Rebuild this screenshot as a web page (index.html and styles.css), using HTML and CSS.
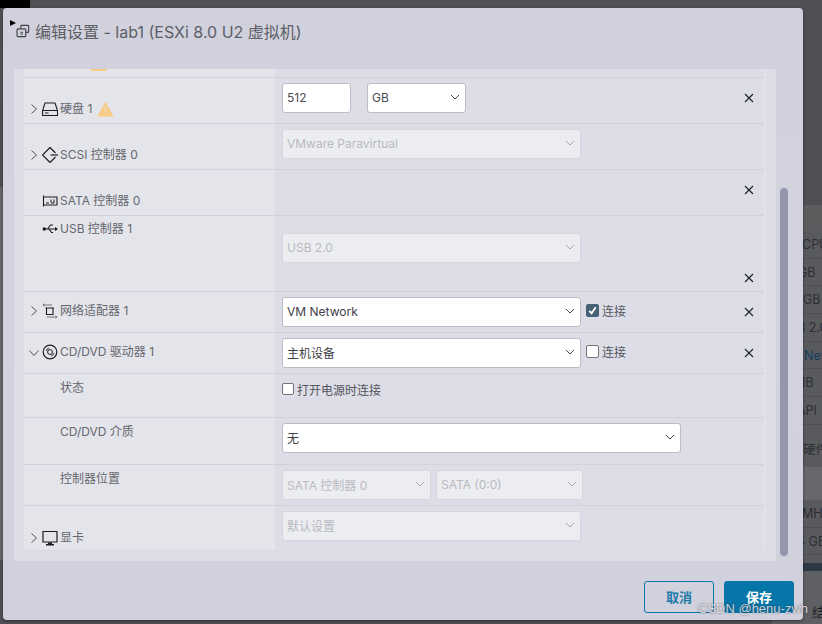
FILE: index.html
```html
<!DOCTYPE html>
<html lang="zh">
<head>
<meta charset="utf-8">
<title>编辑设置</title>
<link rel="stylesheet" href="styles.css">
</head>
<body>
<div class="corner"></div>
<aside class="backdrop">
  <div class="bd-top"></div>
  <div class="bd-row o30">CPU</div>
  <div class="bd-row o26">GB</div>
  <div class="bd-row o31">GB</div>
  <div class="bd-row o25">B 2.0</div>
  <div class="bd-row bd-link o32">Net</div>
  <div class="bd-row o22">MB</div>
  <div class="bd-row o25">API</div>
  <div class="bd-head o31">硬件</div>
  <div class="bd-gap"></div>
  <div class="bd-row o30">MHz</div>
  <div class="bd-row o25">4 GB</div>
  <div class="bd-dark"></div>
  <div class="bd-foot">结</div>
</aside>

<section class="dialog">
  <span class="caret"></span>
  <header class="title">
    <svg class="title-icon" viewBox="0 0 16 16" width="14" height="14"><path d="M5.500 4.500V2.500a1 1 0 0 1 1-1h7a1 1 0 0 1 1 1v6a1 1 0 0 1-1 1h-2" fill="none" stroke="#3e3f46" stroke-width="1.300"/><rect x="1.200" y="5.500" width="10" height="9" rx="1.200" fill="none" stroke="#3e3f46" stroke-width="1.300"/><path d="M5 9.500h3M5 11.500h3" stroke="#3e3f46" stroke-width="1"/></svg>
    <h1>编辑设置 - lab1 (ESXi 8.0 U2 虚拟机)</h1>
  </header>

  <div class="panel">
    <div class="table">
      <div class="row row-clip"><div class="lab"><span class="clip-warn"></span></div><div class="val"></div></div>

      <div class="row h46">
        <div class="lab pad-low">
          <svg class="chev" viewBox="0 0 8 12"><path d="M1.500 1.500 6.500 6l-5 4.500" /></svg>
          <svg class="dev" viewBox="0 0 16 16"><path d="M3 2h10l2.500 7.500v5H.6v-5zM.6 9.500h14.800M3 12h3.500" fill="none" stroke="#1c1d22" stroke-width="1.100"/></svg>
          <span>硬盘 1</span>
          <svg class="warn" viewBox="0 0 16 15"><path d="M8 .5 15.600 14.500H.4z" fill="#f8cb85"/><path d="M8 4.500v5.500M8 11.300v1.400" stroke="#ecdcc0" stroke-width="1.400"/></svg>
        </div>
        <div class="val">
          <input class="field w69" value="512" readonly>
          <div class="select w99 gap16"><span>GB</span><svg class="arrow" viewBox="0 0 10 6"><path d="M1 1l4 4 4-4"/></svg></div>
          <button class="close" aria-label="删除"><svg viewBox="0 0 10 10"><path d="M1 1l8 8M9 1l-8 8"/></svg></button>
        </div>
      </div>

      <div class="row h46">
        <div class="lab pad-low">
          <svg class="chev" viewBox="0 0 8 12"><path d="M1.500 1.500 6.500 6l-5 4.500" /></svg>
          <svg class="dev" viewBox="0 0 16 16"><path d="M8 .5 13.500 6M8 .5.5 8 8 15.500l5.500-5.500" fill="none" stroke="#1c1d22" stroke-width="1.200"/><path d="M8.500 8H16" stroke="#1c1d22" stroke-width="1.200"/></svg>
          <span>SCSI 控制器 0</span>
        </div>
        <div class="val">
          <div class="select w299 off"><span>VMware Paravirtual</span><svg class="arrow" viewBox="0 0 10 6"><path d="M1 1l4 4 4-4"/></svg></div>
        </div>
      </div>

      <div class="row h46">
        <div class="lab pad-low">
          <span class="chev-space"></span>
          <svg class="dev" viewBox="0 0 16 16"><path d="M1.500 2.500v11M1 4h14v8H1" fill="none" stroke="#1c1d22" stroke-width="1.100"/><path d="M4 10h3M9 10h3V6.500M9 6.500v3" fill="none" stroke="#1c1d22"/></svg>
          <span>SATA 控制器 0</span>
        </div>
        <div class="val val-top">
          <button class="close" aria-label="删除"><svg viewBox="0 0 10 10"><path d="M1 1l8 8M9 1l-8 8"/></svg></button>
        </div>
      </div>

      <div class="row h76">
        <div class="lab pad-high">
          <span class="chev-space"></span>
          <svg class="dev" viewBox="0 0 16 16"><path d="M3 8h12M5.500 8l3-4H11M7 8l2.500 3.500H11" fill="none" stroke="#1c1d22" stroke-width="1.100"/><circle cx="2.300" cy="8" r="1.800" fill="#1c1d22"/><path d="M13 6l3 2-3 2z" fill="#1c1d22"/></svg>
          <span>USB 控制器 1</span>
        </div>
        <div class="val val-usb">
          <div class="select w299 off"><span>USB 2.0</span><svg class="arrow" viewBox="0 0 10 6"><path d="M1 1l4 4 4-4"/></svg></div>
          <button class="close close-usb" aria-label="删除"><svg viewBox="0 0 10 10"><path d="M1 1l8 8M9 1l-8 8"/></svg></button>
        </div>
      </div>

      <div class="row h41">
        <div class="lab pad-mid">
          <svg class="chev" viewBox="0 0 8 12"><path d="M1.500 1.500 6.500 6l-5 4.500" /></svg>
          <svg class="dev" viewBox="0 0 16 16"><path d="M1 2h9M1 2l1.500-1.200M1 2l1.500 1.200M5 14h10M15 14l-1.500-1.200M15 14l-1.500 1.200" fill="none" stroke="#66676d" stroke-width=".9"/><path d="M3.500 5h8.500M4.500 5v6.500h6.500V5" fill="none" stroke="#1c1d22" stroke-width="1.100"/></svg>
          <span>网络适配器 1</span>
        </div>
        <div class="val">
          <div class="select w299 on"><span>VM Network</span><svg class="arrow" viewBox="0 0 10 6"><path d="M1 1l4 4 4-4"/></svg></div>
          <label class="check"><span class="box checked"><svg viewBox="0 0 12 12"><path d="M2.500 6.500 5 9l4.500-6.500"/></svg></span><span class="check-text">连接</span></label>
          <button class="close" aria-label="删除"><svg viewBox="0 0 10 10"><path d="M1 1l8 8M9 1l-8 8"/></svg></button>
        </div>
      </div>

      <div class="row h41">
        <div class="lab pad-mid">
          <svg class="chev chev-open" viewBox="0 0 12 8"><path d="M1.500 1.500 6 6.500l4.500-5" /></svg>
          <svg class="dev" viewBox="0 0 16 16"><circle cx="8" cy="8" r="6.800" fill="none" stroke="#1c1d22" stroke-width="1.200"/><circle cx="8" cy="8" r="2.400" fill="none" stroke="#1c1d22"/><path d="M4 7a4.500 4.500 0 0 1 3-3M12 9a4.500 4.500 0 0 1-3 3" fill="none" stroke="#1c1d22" stroke-width=".9"/></svg>
          <span>CD/DVD 驱动器 1</span>
        </div>
        <div class="val">
          <div class="select w299 on"><span>主机设备</span><svg class="arrow" viewBox="0 0 10 6"><path d="M1 1l4 4 4-4"/></svg></div>
          <label class="check"><span class="box"></span><span class="check-text">连接</span></label>
          <button class="close" aria-label="删除"><svg viewBox="0 0 10 10"><path d="M1 1l8 8M9 1l-8 8"/></svg></button>
        </div>
      </div>

      <div class="row h44">
        <div class="lab indent">状态</div>
        <div class="val val-status">
          <label class="check check-first"><span class="box"></span><span class="check-text">打开电源时连接</span></label>
        </div>
      </div>

      <div class="row h47">
        <div class="lab indent">CD/DVD 介质</div>
        <div class="val">
          <div class="select w399 on"><span>无</span><svg class="arrow" viewBox="0 0 10 6"><path d="M1 1l4 4 4-4"/></svg></div>
        </div>
      </div>

      <div class="row h41">
        <div class="lab indent">控制器位置</div>
        <div class="val">
          <div class="select w149 off"><span>SATA 控制器 0</span><svg class="arrow" viewBox="0 0 10 6"><path d="M1 1l4 4 4-4"/></svg></div>
          <div class="select w147 off gap5"><span>SATA (0:0)</span><svg class="arrow" viewBox="0 0 10 6"><path d="M1 1l4 4 4-4"/></svg></div>
        </div>
      </div>

      <div class="row h45 last">
        <div class="lab pad-lower">
          <svg class="chev" viewBox="0 0 8 12"><path d="M1.500 1.500 6.500 6l-5 4.500" /></svg>
          <svg class="dev" viewBox="0 0 16 16"><path d="M1 1.500h14v10.500H1z" fill="none" stroke="#1c1d22" stroke-width="1.200"/><path d="M6 12.500h4v1.500h2v1.500H4V14h2z" fill="#1c1d22"/></svg>
          <span>显卡</span>
        </div>
        <div class="val">
          <div class="select w299 off"><span>默认设置</span><svg class="arrow" viewBox="0 0 10 6"><path d="M1 1l4 4 4-4"/></svg></div>
        </div>
      </div>
    </div>
    <div class="track"><div class="thumb"></div></div>
  </div>

  <footer class="actions">
    <button class="btn btn-line">取消</button>
    <button class="btn btn-solid">保存</button>
  </footer>
</section>
<div class="watermark">CSDN @henu-zwh</div>
</body>
</html>
```

FILE: styles.css
```css
* { box-sizing: border-box; }
html, body { margin: 0; height: 100%; }
body {
  width: 822px;
  height: 624px;
  overflow: hidden;
  position: relative;
  background: linear-gradient(#4f5055 0 187px, #66676b 187px 560px, #4f5055 560px);
  font-family: Inter, "Noto Sans CJK SC", sans-serif;
  font-size: 12px;
  color: #66676e;
}
.corner { position: absolute; left: 0; top: 0; width: 30px; height: 8px; background: #000; }

/* page behind the dialog */
.backdrop {
  position: absolute;
  right: 0;
  top: 0;
  width: 50px;
  height: 624px;
  display: flex;
  flex-direction: column;
  align-items: stretch;
  font-size: 12.500px;
  overflow: hidden;
  background: #595a5e;
}
.backdrop > div { flex-shrink: 0; }
.bd-top { height: 231px; background: linear-gradient(#4f5055 0 205px, #5d5d60 205px); }
.bd-row {
  height: 27.700px;
  line-height: 27px;
  white-space: nowrap;
  border-bottom: 1px solid #4f5054;
  color: #2d2e33;
}
.bd-link { color: #123f5c; }
.o22 { padding-left: 22px; }
.o25 { padding-left: 25px; }
.o26 { padding-left: 26px; }
.o30 { padding-left: 30px; }
.o31 { padding-left: 31px; }
.o32 { padding-left: 32px; }
.bd-head { height: 42px; padding-top: 14px; line-height: 22px; color: #2d2e33; white-space: nowrap; }
.bd-gap { height: 33px; background: #67686b; }
.bd-dark { height: 8px; margin-top: 8px; background: #2c3843; }
.backdrop .bd-foot { flex: 1; padding: 34px 0 0 40px; line-height: 14px; font-size: 13px; color: #1f2024; background: #5f6063; }

/* dialog */
.dialog {
  position: absolute;
  left: 3px;
  top: 8px;
  width: 800px;
  height: 612px;
  border-radius: 4px;
  background: linear-gradient(#d0d1dc, #d3d3df 40%, #d1d1dd);
  box-shadow: 0 1px 3px rgba(0,0,0,.45);
  display: flex;
  flex-direction: column;
}
.caret {
  position: absolute;
  left: 7px;
  top: 12px;
  width: 0;
  height: 0;
  border-left: 6px solid #000;
  border-top: 3px solid transparent;
  border-bottom: 3px solid transparent;
}
.title {
  height: 61px;
  display: flex;
  align-items: flex-start;
  padding: 14px 0 0 13px;
  flex-shrink: 0;
}
.title-icon { margin-top: 2px; margin-right: 5px; }
h1 {
  margin: 0;
  font-size: 16px;
  line-height: 20px;
  font-weight: 400;
  color: #5d5e66;
}

.panel {
  width: 762px;
  margin-left: 11px;
  height: 492px;
  display: flex;
  background: #dcdde7;
  padding-left: 10px;
  position: relative;
  flex-shrink: 0;
}
.table {
  width: 741px;
  height: 481px;
  display: flex;
  flex-direction: column;
  border-right: 1px solid #e5e6ee;
}
.row {
  display: grid;
  grid-template-columns: 251px 1fr;
  border-bottom: 1px solid #d1d2dc;
  flex-shrink: 0;
}
.row.last { border-bottom-color: #d8d9e2; }
.row-clip { height: 9px; overflow: hidden; }
.h46 { height: 46px; }
.h76 { height: 76px; }
.h41 { height: 41px; }
.h44 { height: 44px; }
.h47 { height: 47px; }
.h45 { height: 45px; }
.lab {
  background: #e4e5eb;
  display: flex;
  align-items: flex-start;
  padding-left: 6px;
  line-height: 14px;
  white-space: nowrap;
}
.row-clip .lab { padding-left: 67px; }
.clip-warn { width: 16px; height: 2px; background: #f8cb85; }
.pad-low { padding-top: 24px; }
.pad-lower { padding-top: 25px; }
.pad-mid { padding-top: 12px; }
.pad-high { padding-top: 6px; }
.indent { padding-left: 36px; padding-top: 7px; }
.chev { width: 8px; height: 12px; margin-top: 1px; fill: none; stroke: #55565c; stroke-width: 1; flex-shrink: 0; }
.chev-open { width: 12px; height: 8px; margin-top: 4px; margin-left: -2px; margin-right: -2px; }
.chev-space { width: 8px; flex-shrink: 0; }
.dev { width: 16px; height: 16px; margin: -1px 2px 0 4px; flex-shrink: 0; }
.warn { width: 17px; height: 16px; margin-left: 5px; margin-top: -1px; }

.val {
  position: relative;
  display: flex;
  align-items: flex-start;
  padding: 5px 0 0 7px;
}
.val-usb { padding-top: 17px; }
.val-status { padding-top: 9px; }
.field, .select {
  height: 30px;
  border-radius: 3px;
  border: 1px solid #bcbdc4;
  background: #fff;
  font: inherit;
  color: #4a4b52;
  padding: 0 4px 2px;
}
.field { outline: none; }
.select {
  display: flex;
  align-items: center;
  justify-content: space-between;
  white-space: nowrap;
}
.arrow { width: 10px; height: 6px; margin-right: 1px; fill: none; stroke: #44454c; stroke-width: 1; margin-top: -1px; flex-shrink: 0; }
.select.off { background: #ecedf1; border-color: #d5d6dc; color: #b9bac1; }
.select.off .arrow { stroke: #a9aab2; }
.select.on { color: #3f4047; }
.w69 { width: 69px; }
.w99 { width: 99px; }
.w149 { width: 149px; }
.w147 { width: 147px; }
.w299 { width: 299px; }
.w399 { width: 399px; }
.gap16 { margin-left: 16px; }
.gap5 { margin-left: 5px; }

.check {
  display: flex;
  align-items: flex-start;
  margin: 7px 0 0 5px;
  color: #55565d;
}
.check-first { margin: 0; }
.check-first .box { width: 12px; height: 12px; }
.check-text { line-height: 16px; white-space: nowrap; }
.box {
  width: 13px;
  height: 13px;
  margin-right: 3px;
  border-radius: 2px;
  border: 1px solid #737479;
  background: #fff;
  flex-shrink: 0;
  display: block;
}
.box.checked { background: #476177; border-color: #476177; }
.box svg { display: block; width: 11px; height: 11px; fill: none; stroke: #fff; stroke-width: 2; }
.close {
  position: absolute;
  left: 469px;
  top: 15px;
  width: 10px;
  height: 10px;
  padding: 0;
  border: 0;
  background: none;
}
.close svg { display: block; width: 10px; height: 10px; fill: none; stroke: #1f2026; stroke-width: 1.100; }
.close-usb { top: 57px; }

.track { position: absolute; left: 766px; top: 119px; width: 8px; height: 368px; }
.thumb { width: 8px; height: 100%; border-radius: 4px; background: #9595ad; }

.actions {
  flex: 1;
  display: flex;
  justify-content: flex-end;
  padding: 20px 9px 0 0;
  gap: 10px;
}
.btn {
  width: 70px;
  height: 32px;
  border-radius: 3px;
  font: 700 13px Inter, "Noto Sans CJK SC", sans-serif;
  padding: 0 0 2px;
}
.btn-line { background: transparent; border: 1px solid #0a77a8; color: #1c7ba8; }
.btn-solid { background: #0675a8; border: 1px solid #0675a8; color: #fff; }

.watermark {
  position: absolute;
  left: 698px;
  top: 601px;
  font-family: "Liberation Sans", sans-serif;
  font-size: 13px;
  line-height: 15px;
  color: rgba(235,235,240,.85);
  text-shadow: 0 0 2px rgba(40,40,50,.75);
}
```
